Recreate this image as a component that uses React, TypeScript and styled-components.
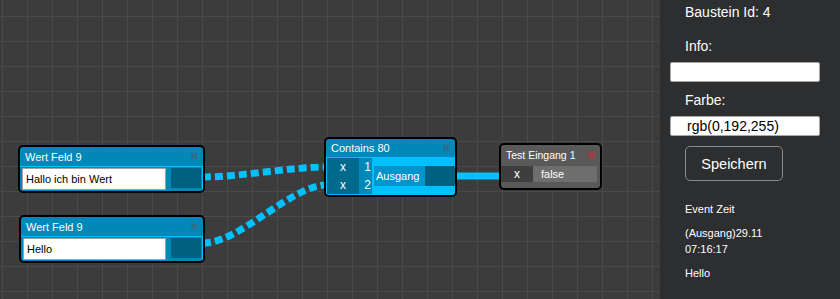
import styled, { createGlobalStyle } from "styled-components";

const GlobalStyle = createGlobalStyle`
  * { box-sizing: border-box; }
  html, body { margin: 0; padding: 0; height: 100%; }
  body {
    font-family: "Liberation Sans", Arial, sans-serif;
    background: #3c3c3c;
    overflow: hidden;
  }
  #root { height: 100%; }
`;

const Page = styled.div`
  display: flex;
  height: 100vh;
`;

const Canvas = styled.div`
  position: relative;
  flex: 1;
  background-color: #3c3c3c;
  background-image: linear-gradient(to right, #4a4a4a 1px, transparent 1px),
    linear-gradient(to bottom, #4a4a4a 1px, transparent 1px);
  background-size: 25px 25px;
  background-position: 2px 16px;
  overflow: hidden;
`;

const Links = styled.svg`
  position: absolute;
  inset: 0;
  width: 100%;
  height: 100%;
`;

const NodeBox = styled.div<{ $x: number; $y: number; $w: number; $h: number; $gray?: boolean }>`
  position: absolute;
  left: ${(p) => p.$x}px;
  top: ${(p) => p.$y}px;
  width: ${(p) => p.$w}px;
  height: ${(p) => p.$h}px;
  border: 2px solid #000;
  border-radius: 5px;
  background: ${(p) => (p.$gray ? "#595959" : "#0088b8")};
  overflow: hidden;
  display: flex;
  flex-direction: column;
`;

const Header = styled.div<{ $h: number; $small?: boolean }>`
  height: ${(p) => p.$h}px;
  flex: none;
  display: flex;
  align-items: center;
  justify-content: space-between;
  padding: 0 4px 0 5px;
  color: #fff;
  font-size: ${(p) => (p.$small ? 10.5 : 11)}px;
`;

const Close = styled.span<{ $red?: boolean }>`
  font-family: "DejaVu Sans", sans-serif;
  font-size: 11px;
  line-height: 11px;
  color: ${(p) => (p.$red ? "#a63c3c" : "#2f6e8c")};
`;

const ValueBody = styled.div`
  flex: 1;
  display: flex;
  align-items: flex-start;
  gap: 5px;
  padding: 1px 1px 1px 2px;
  border-top: 1px solid #00c0ff;
  border-right: 1px solid #00c0ff;
`;

const ValueInput = styled.div`
  flex: 1;
  height: 22px;
  background: #fff;
  border: 1px solid #a0a0a0;
  padding-left: 3px;
  font-size: 11px;
  line-height: 20px;
  color: #000;
`;

const Port = styled.div`
  width: 30px;
  height: 20px;
  flex: none;
  background: #00607f;
`;

const CalcBody = styled.div`
  flex: 1;
  display: flex;
  align-items: center;
  background: #00c0ff;
  padding: 1px 0 1px 1px;
`;

const InputGrid = styled.div`
  display: grid;
  grid-template-columns: 32px 13px;
  grid-auto-rows: 18px;
  align-self: flex-start;
  background: #0088b8;
`;

const XCell = styled.div<{ $gray?: boolean }>`
  display: flex;
  align-items: center;
  justify-content: center;
  width: 32px;
  height: ${(p) => (p.$gray ? "16px" : "auto")};
  background: ${(p) => (p.$gray ? "#3e3e3e" : "#006a8c")};
  color: #fff;
  font-size: 12px;
`;

const NumCell = styled.div`
  display: flex;
  align-items: center;
  justify-content: flex-end;
  padding-right: 1px;
  color: #fff;
  font-size: 12px;
`;

const OutLabel = styled.div`
  width: 51px;
  height: 20px;
  margin-left: 2px;
  background: #0094cc;
  color: #fff;
  font-size: 11px;
  line-height: 20px;
  padding-left: 2px;
`;

const TestBody = styled.div`
  flex: 1;
  display: flex;
  align-items: flex-start;
  padding: 1px 3px 0 0;
`;

const FalseCell = styled.div`
  flex: 1;
  height: 16px;
  background: #6e6e6e;
  color: #fff;
  font-size: 11px;
  line-height: 16px;
  padding-left: 8px;
`;

const Sidebar = styled.aside`
  width: 180px;
  flex: none;
  background: #2d2e30;
  padding: 4px 20px 0 10px;
  color: #fff;
  display: flex;
  flex-direction: column;
  align-items: flex-start;
`;

const Label = styled.div<{ $mt?: number }>`
  margin: ${(p) => p.$mt ?? 0}px 0 0 15px;
  font-size: 14px;
  line-height: 16px;
`;

const Field = styled.div`
  width: 150px;
  height: 20px;
  margin-top: 8px;
  background: #fff;
  border: 1px solid #a8a8a8;
  border-radius: 2px;
  padding-left: 16px;
  font-size: 14px;
  line-height: 18px;
  color: #000;
`;

const SaveButton = styled.button`
  margin: 10px 0 0 15px;
  width: 98px;
  height: 35px;
  background: transparent;
  border: 1px solid #8a8a8a;
  border-radius: 5px;
  color: #fff;
  font-family: "Liberation Sans", Arial, sans-serif;
  font-size: 14.5px;
  padding: 0;
`;

const Info = styled.p<{ $mt: number }>`
  margin: ${(p) => p.$mt}px 0 0 15px;
  font-size: 11px;
  line-height: 16px;
  color: #fff;
`;

function ValueNode({ x, y, w, value }: { x: number; y: number; w: number; value: string }) {
  return (
    <NodeBox $x={x} $y={y} $w={w} $h={48}>
      <Header $h={19}>
        <span>Wert Feld 9</span>
        <Close>✖</Close>
      </Header>
      <ValueBody>
        <ValueInput>{value}</ValueInput>
        <Port />
      </ValueBody>
    </NodeBox>
  );
}

export default function App() {
  return (
    <Page>
      <GlobalStyle />
      <Canvas>
        <Links>
          <g fill="none" stroke="#00c0ff" strokeWidth={7}>
            <path d="M203 177 C 240 177, 290 167, 326 167" strokeDasharray="8 4" />
            <path d="M203 243 C 240 243, 290 186, 326 185" strokeDasharray="8 4" />
            <path d="M455 176 L 502 176" />
          </g>
        </Links>

        <ValueNode x={18} y={145} w={187} value="Hallo ich bin Wert" />
        <ValueNode x={19} y={215} w={186} value="Hello" />

        <NodeBox $x={324} $y={137} $w={133} $h={60}>
          <Header $h={18}>
            <span>Contains 80</span>
            <Close>✖</Close>
          </Header>
          <CalcBody>
            <InputGrid>
              <XCell>x</XCell>
              <NumCell>1</NumCell>
              <XCell>x</XCell>
              <NumCell>2</NumCell>
            </InputGrid>
            <OutLabel>Ausgang</OutLabel>
            <Port />
          </CalcBody>
        </NodeBox>

        <NodeBox $x={499} $y={143} $w={103} $h={47} $gray>
          <Header $h={20} $small>
            <span>Test Eingang 1</span>
            <Close $red>✖</Close>
          </Header>
          <TestBody>
            <XCell $gray>x</XCell>
            <FalseCell>false</FalseCell>
          </TestBody>
        </NodeBox>
      </Canvas>

      <Sidebar>
        <Label>Baustein Id: 4</Label>
        <Label $mt={18}>Info:</Label>
        <Field />
        <Label $mt={10}>Farbe:</Label>
        <Field>rgb(0,192,255)</Field>
        <SaveButton>Speichern</SaveButton>
        <Info $mt={20}>Event Zeit</Info>
        <Info $mt={8}>
          (Ausgang)29.11
          <br />
          07:16:17
        </Info>
        <Info $mt={8}>Hello</Info>
      </Sidebar>
    </Page>
  );
}
